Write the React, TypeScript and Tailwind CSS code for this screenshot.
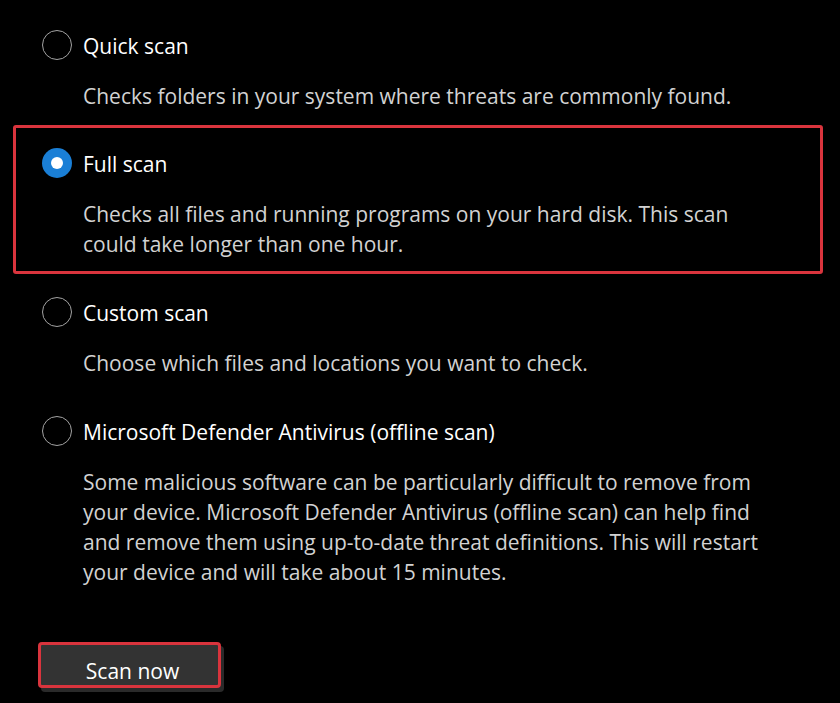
import React, { useState } from "react";

type Option = {
  id: string;
  label: string;
  desc: string[];
};

const options: Option[] = [
  {
    id: "quick",
    label: "Quick scan",
    desc: ["Checks folders in your system where threats are commonly found."],
  },
  {
    id: "full",
    label: "Full scan",
    desc: [
      "Checks all files and running programs on your hard disk. This scan",
      "could take longer than one hour.",
    ],
  },
  {
    id: "custom",
    label: "Custom scan",
    desc: ["Choose which files and locations you want to check."],
  },
  {
    id: "offline",
    label: "Microsoft Defender Antivirus (offline scan)",
    desc: [
      "Some malicious software can be particularly difficult to remove from",
      "your device. Microsoft Defender Antivirus (offline scan) can help find",
      "and remove them using up-to-date threat definitions. This will restart",
      "your device and will take about 15 minutes.",
    ],
  },
];

function Radio({ checked }: { checked: boolean }) {
  if (checked) {
    return (
      <span className="flex h-[30px] w-[30px] shrink-0 items-center justify-center rounded-full bg-[#1a7fd6]">
        <span className="h-[12px] w-[12px] rounded-full bg-white" />
      </span>
    );
  }
  return (
    <span className="h-[30px] w-[30px] shrink-0 rounded-full border-[1.5px] border-[#a3a3a3]" />
  );
}

function ScanOption({
  opt,
  checked,
  onSelect,
}: {
  opt: Option;
  checked: boolean;
  onSelect: () => void;
}) {
  return (
    <div>
      <button
        onClick={onSelect}
        className="flex h-[30px] items-center gap-[11px] text-left"
      >
        <Radio checked={checked} />
        <span className="pt-[2px] text-[21px] leading-[30px] text-white">{opt.label}</span>
      </button>
      <div className="mt-[21px] pl-[41px] text-[21px] leading-[30px] text-[#d2d2d2]">
        {opt.desc.map((line) => (
          <p key={line}>{line}</p>
        ))}
      </div>
    </div>
  );
}

export default function App() {
  const [selected, setSelected] = useState("full");

  return (
    <div
      className="h-[703px] w-[840px] overflow-hidden bg-black"
      style={{ fontFamily: '"Open Sans", "Noto Sans", sans-serif' }}
    >
      <div className="pl-[42px] pt-[30px]">
        <ScanOption
          opt={options[0]}
          checked={selected === "quick"}
          onSelect={() => setSelected("quick")}
        />
      </div>

      {/* highlighted option */}
      <div className="ml-[13px] mt-[14px] w-[810px] rounded-[3px] border-[3px] border-[#d9343d] pb-[12px] pl-[26px] pt-[20px]">
        <ScanOption
          opt={options[1]}
          checked={selected === "full"}
          onSelect={() => setSelected("full")}
        />
      </div>

      <div className="space-y-[38px] pl-[42px] pt-[23px]">
        <ScanOption
          opt={options[2]}
          checked={selected === "custom"}
          onSelect={() => setSelected("custom")}
        />
        <ScanOption
          opt={options[3]}
          checked={selected === "offline"}
          onSelect={() => setSelected("offline")}
        />
      </div>

      <div className="pl-[38px] pt-[55px]">
        <button className="flex h-[46px] w-[183px] items-center justify-center rounded-[4px] border-[3px] border-[#d9343d] bg-[#333333] pl-[6px] pt-[12px] text-[21px] leading-[24px] text-white shadow-[3px_4px_0_#2a2a2a]">
          Scan now
        </button>
      </div>
    </div>
  );
}
